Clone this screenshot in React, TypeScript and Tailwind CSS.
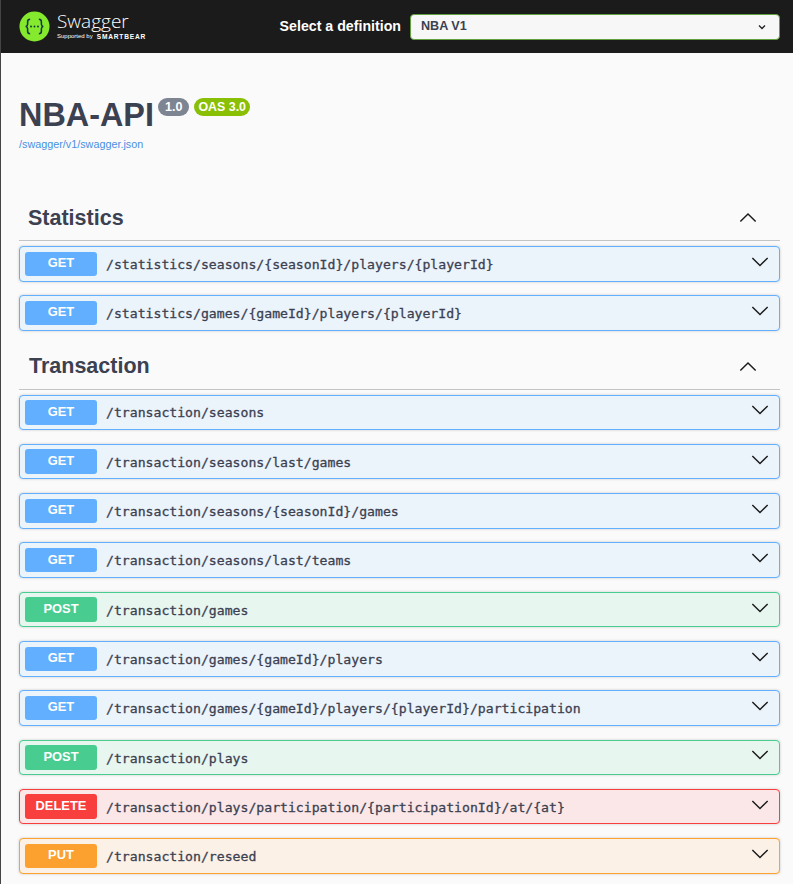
import React from "react";

type Method = "GET" | "POST" | "DELETE" | "PUT";

const methodStyles: Record<Method, { row: string; badge: string }> = {
  GET: { row: "border-[#61affe] bg-[#ebf3fb]", badge: "bg-[#61affe]" },
  POST: { row: "border-[#49cc90] bg-[#e8f6f0]", badge: "bg-[#49cc90]" },
  DELETE: { row: "border-[#f93e3e] bg-[#fbe7e7]", badge: "bg-[#f93e3e]" },
  PUT: { row: "border-[#fca130] bg-[#fbf1e6]", badge: "bg-[#fca130]" },
};

const statistics: [Method, string][] = [
  ["GET", "/statistics/seasons/{seasonId}/players/{playerId}"],
  ["GET", "/statistics/games/{gameId}/players/{playerId}"],
];

const transaction: [Method, string][] = [
  ["GET", "/transaction/seasons"],
  ["GET", "/transaction/seasons/last/games"],
  ["GET", "/transaction/seasons/{seasonId}/games"],
  ["GET", "/transaction/seasons/last/teams"],
  ["POST", "/transaction/games"],
  ["GET", "/transaction/games/{gameId}/players"],
  ["GET", "/transaction/games/{gameId}/players/{playerId}/participation"],
  ["POST", "/transaction/plays"],
  ["DELETE", "/transaction/plays/participation/{participationId}/at/{at}"],
  ["PUT", "/transaction/reseed"],
];

const Chevron = ({ up, className }: { up?: boolean; className?: string }) => (
  <svg viewBox="0 0 20 20" className={className} fill="none" stroke="#1a1a1a" strokeWidth="1.6">
    <path d={up ? "M1.5 14 10 5.5 18.5 14" : "M1.5 5.5 10 14 18.5 5.5"} />
  </svg>
);

const Logo = () => (
  <svg viewBox="0 0 32 32" className="h-[31px] w-[31px] shrink-0">
    <circle cx="16" cy="16" r="15.5" fill="#85ea2d" />
    <path
      d="M11.5 8.5c-2 0-2.6 1-2.6 2.6v2.6c0 1.4-.7 2.1-2 2.3 1.3.2 2 .9 2 2.3v2.6c0 1.6.6 2.6 2.6 2.6M20.5 8.5c2 0 2.6 1 2.6 2.6v2.6c0 1.4.7 2.1 2 2.3-1.3.2-2 .9-2 2.3v2.6c0 1.6-.6 2.6-2.6 2.6"
      fill="none"
      stroke="#173647"
      strokeWidth="1.6"
    />
    <circle cx="12.4" cy="16" r="1" fill="#173647" />
    <circle cx="16" cy="16" r="1" fill="#173647" />
    <circle cx="19.6" cy="16" r="1" fill="#173647" />
  </svg>
);

const Row = ({ method, path }: { method: Method; path: string }) => {
  const s = methodStyles[method];
  return (
    <div className={`mb-[13.8px] flex h-[35.5px] items-center rounded-[4px] border pl-[5px] pr-[10px] shadow-[0_0_3px_rgba(0,0,0,0.19)] ${s.row}`}>
      <span className={`flex h-[24.5px] w-[72px] shrink-0 items-center justify-center rounded-[3px] pb-[2px] text-[12.9px] font-bold text-white ${s.badge}`}>
        {method}
      </span>
      <span className="ml-[9px] mt-[2px] flex-1 font-['DejaVu_Sans_Mono',monospace] text-[13.15px] text-[#3b4151] [-webkit-text-stroke:0.3px_#3b4151]">
        {path}
      </span>
      <Chevron className="-mt-[4px] h-[18px] w-[18px]" />
    </div>
  );
};

const Section = ({ title, rows, className }: { title: string; rows: [Method, string][]; className: string }) => (
  <section>
    <div className={`mb-[5px] flex h-[44px] items-center justify-between border-b border-[#c4c4c6] pr-[23px] ${className}`}>
      <h3 className="text-[21.5px] font-bold text-[#3b4151]">{title}</h3>
      <Chevron up className="h-[18px] w-[18px]" />
    </div>
    {rows.map(([m, p]) => (
      <Row key={p} method={m} path={p} />
    ))}
  </section>
);

export default function App() {
  return (
    <div className="h-[884px] overflow-hidden border-l border-[#444] bg-[#fafafa] font-['Liberation_Sans',sans-serif]">
      <header className="flex h-[53px] items-center bg-[#1b1b1b] pl-[18px] pr-[13px]">
        <div className="flex w-[260px] items-center gap-[7px]">
          <Logo />
          <div className="flex flex-col text-white">
            <span className="-mt-[2px] font-['Open_Sans',sans-serif] text-[19px] font-light leading-[21px]">Swagger</span>
            <span className="flex items-center gap-[4px] text-[6px] leading-[9px]">
              Supported by
              <span className="text-[6.6px] font-bold tracking-[0.8px]">SMARTBEAR</span>
            </span>
          </div>
        </div>
        <label className="ml-auto mr-[9px] text-[14.2px] font-bold text-white">Select a definition</label>
        <div className="flex h-[26px] w-[370px] items-center justify-between rounded-[4px] border border-[#62a03f] bg-[#f7f7f7] pl-[10px] pr-[12px] text-[12.6px] font-bold text-[#3b4151]">
          NBA V1
          <svg viewBox="0 0 20 20" className="h-[10px] w-[10px]">
            <path d="M4 7l6 6 6-6" fill="none" stroke="#222" strokeWidth="2.6" />
          </svg>
        </div>
      </header>

      <main className="pl-[18px] pr-[13px] pt-[42px]">
        <div className="mb-[46px]">
          <div className="flex items-start">
            <h2 className="text-[32.4px] font-bold leading-[40px] text-[#3b4151]">NBA-API</h2>
            <span className="ml-[4px] mt-[3px] rounded-full bg-[#7d8492] px-[7px] py-[1px] text-[12.6px] font-bold leading-[16px] text-white">1.0</span>
            <span className="ml-[5px] mt-[3px] rounded-full bg-[#89bf04] px-[4px] py-[1px] text-[12.4px] font-bold leading-[16px] text-white">OAS 3.0</span>
          </div>
          <a className="mt-[2px] block text-[10.8px] leading-[14px] text-[#4990e2]">/swagger/v1/swagger.json</a>
        </div>
        <Section title="Statistics" rows={statistics} className="pb-[1px] pl-[9px]" />
        <div className="pt-[1px]">
          <Section title="Transaction" rows={transaction} className="pb-[1px] pl-[10px]" />
        </div>
      </main>
    </div>
  );
}
